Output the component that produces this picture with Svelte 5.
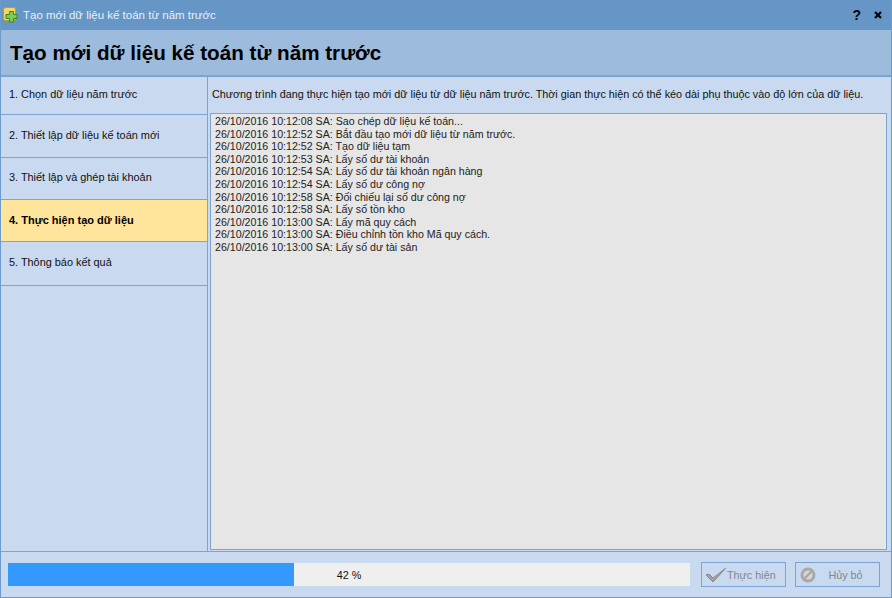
<script>
	const steps = [
		'1. Chọn dữ liệu năm trước',
		'2. Thiết lập dữ liệu kế toán mới',
		'3. Thiết lập và ghép tài khoản',
		'4. Thực hiện tạo dữ liệu',
		'5. Thông báo kết quả'
	];
	const current = 3;
	const progress = 42;
	const logs = [
		'26/10/2016 10:12:08 SA: Sao chép dữ liệu kế toán...',
		'26/10/2016 10:12:52 SA: Bắt đầu tạo mới dữ liệu từ năm trước.',
		'26/10/2016 10:12:52 SA: Tạo dữ liệu tạm',
		'26/10/2016 10:12:53 SA: Lấy số dư tài khoản',
		'26/10/2016 10:12:54 SA: Lấy số dư tài khoản ngân hàng',
		'26/10/2016 10:12:54 SA: Lấy số dư công nợ',
		'26/10/2016 10:12:58 SA: Đối chiếu lại số dư công nợ',
		'26/10/2016 10:12:58 SA: Lấy số tồn kho',
		'26/10/2016 10:13:00 SA: Lấy mã quy cách',
		'26/10/2016 10:13:00 SA: Điều chỉnh tồn kho Mã quy cách.',
		'26/10/2016 10:13:00 SA: Lấy số dư tài sản'
	];
</script>

<div class="window">
	<div class="titlebar">
		<svg class="app-icon" width="16" height="16" viewBox="0 0 16 16">
			<rect x="0.5" y="0.5" width="12" height="13" rx="2" fill="#f6d75a" stroke="#c79a22" />
			<path d="M6.5 4.5h4v3h3.5v4h-3.500v3.500h-4v-3.500H3v-4h3.500z" fill="#7ccb52" stroke="#2f8a2a" />
		</svg>
		<span class="title">Tạo mới dữ liệu kế toán từ năm trước</span>
		<span class="caption">
			<span class="help">?</span>
			<svg width="8" height="8" viewBox="0 0 8 8"><path d="M1 1l6 6M7 1L1 7" stroke="#000" stroke-width="2.2" /></svg>
		</span>
	</div>
	<div class="heading">Tạo mới dữ liệu kế toán từ năm trước</div>
	<div class="body">
		<div class="steps">
			{#each steps as step, i}
				<div class="step" class:active={i === current}>{step}</div>
			{/each}
		</div>
		<div class="content">
			<p class="note">Chương trình đang thực hiện tạo mới dữ liệu từ dữ liệu năm trước. Thời gian thực hiện có thể kéo dài phụ thuộc vào độ lớn của dữ liệu.</p>
			<div class="log">
				{#each logs as line}
					<div>{line}</div>
				{/each}
			</div>
		</div>
	</div>
	<div class="footer">
		<div class="progress">
			<div class="fill" style="width: {progress}%"></div>
			<span class="percent">{progress} %</span>
		</div>
		<button class="btn" disabled>
			<svg width="22" height="18" viewBox="0 0 22 18">
				<path d="M1 9l3-1 4 4L21 2 8 16z" fill="#a0a0a0" stroke="#8a8a8a" stroke-linejoin="round" />
			</svg>
			<span class="label">Thực hiện</span>
		</button>
		<button class="btn" disabled>
			<svg width="18" height="18" viewBox="0 0 18 18">
				<circle cx="9" cy="9" r="7.500" fill="#a8a8a8" />
				<circle cx="9" cy="9" r="4.600" fill="#d6d6d6" />
				<path d="M5.500 12.500l7-7" stroke="#a8a8a8" stroke-width="2.400" />
			</svg>
			<span class="label wide">Hủy bỏ</span>
		</button>
	</div>
</div>

<style>
	:global(body) {
		margin: 0;
	}

	.window {
		width: 892px;
		height: 598px;
		box-sizing: border-box;
		display: flex;
		flex-direction: column;
		background: #c9daf0;
		border: 1px solid #6c9bcb;
		border-top: none;
		font-family: "Liberation Sans", Arial, sans-serif;
		font-size: 10.8px;
		color: #111;
		overflow: hidden;
	}

	.titlebar {
		height: 30px;
		flex: none;
		display: flex;
		align-items: center;
		gap: 4px;
		padding: 0 10px 0 3px;
		background: #6596c6;
		margin: 0 -1px;
	}

	.app-icon {
		flex: none;
	}

	.title {
		color: #e8f0f8;
		font-size: 11.5px;
		flex: 1;
	}

	.caption {
		display: flex;
		align-items: center;
		gap: 13px;
	}

	.help {
		font-weight: bold;
		font-size: 14px;
		color: #000;
	}

	.heading {
		height: 45px;
		flex: none;
		box-sizing: border-box;
		padding: 0 0 0 9px;
		display: flex;
		align-items: center;
		background: #9dbbdc;
		font-size: 20.65px;
		font-weight: bold;
		color: #000;
	}

	.body {
		flex: 1;
		min-height: 0;
		display: flex;
		border-top: 2px solid #7ba4d2;
		border-bottom: 1px solid #7ba4d2;
	}

	.steps {
		width: 206px;
		flex: none;
		border-right: 1px solid #7ba4d2;
	}

	.step {
		height: 42px;
		box-sizing: border-box;
		padding: 0 0 3px 8px;
		display: flex;
		align-items: center;
		border-bottom: 1px solid #7ba4d2;
		font-size: 10.9px;
	}

	.step:first-child {
		height: 38px;
	}

	.step:nth-child(2) {
		height: 43px;
		padding-bottom: 2px;
	}

	.step:nth-child(4) {
		padding-bottom: 1px;
		font-size: 11px;
	}

	.step:nth-child(5) {
		height: 44px;
	}

	.step.active {
		background: #ffe49b;
		font-weight: bold;
		color: #000;
	}

	.content {
		flex: 1;
		min-width: 0;
		display: flex;
		flex-direction: column;
		padding: 0 4px 1px 2px;
	}

	.note {
		margin: 0;
		height: 36px;
		flex: none;
		display: flex;
		align-items: center;
		padding: 0 0 2px 2px;
		box-sizing: border-box;
		white-space: nowrap;
	}

	.log {
		flex: 1;
		background: #e6e6e6;
		border: 1px solid #7ba4d2;
		padding: 1px 4px;
		line-height: 12.6px;
		font-size: 10.65px;
		color: #222;
	}

	.footer {
		height: 45px;
		flex: none;
		box-sizing: border-box;
		display: flex;
		align-items: center;
		padding: 0 11px 0 7px;
		gap: 9px;
	}

	.progress {
		position: relative;
		width: 682px;
		height: 23px;
		margin-right: 2px;
		background: #efefef;
		display: flex;
		align-items: center;
		justify-content: center;
	}

	.fill {
		position: absolute;
		left: 0;
		top: 0;
		bottom: 0;
		background: #3399ff;
	}

	.percent {
		position: relative;
	}

	.btn {
		width: 85px;
		height: 25px;
		box-sizing: border-box;
		padding: 0 0 0 3px;
		display: flex;
		align-items: center;
		gap: 0;
		background: #c9daf0;
		border: 1px solid #7ba4d2;
		font: inherit;
		color: #808890;
	}

	.label {
		white-space: nowrap;
	}

	.btn .wide {
		flex: 1;
		text-align: center;
		padding-right: 5px;
	}
</style>
